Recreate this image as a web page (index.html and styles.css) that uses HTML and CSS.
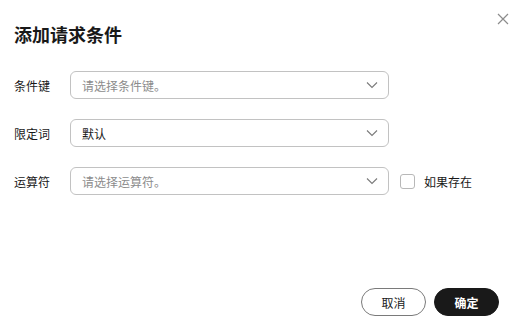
FILE: index.html
```html
<!DOCTYPE html>
<html lang="zh">
<head>
<meta charset="utf-8">
<link rel="stylesheet" href="styles.css">
</head>
<body>
<div class="dialog">
  <button class="close" aria-label="关闭">
    <svg width="12" height="12" viewBox="0 0 12 12"><path d="M1 1L11 11M11 1L1 11" stroke="#8c8c8c" stroke-width="1.2" fill="none"/></svg>
  </button>
  <h1 class="title">添加请求条件</h1>
  <div class="form">
    <div class="row">
      <label class="label">条件键</label>
      <div class="select"><span class="placeholder">请选择条件键。</span><svg class="chev" width="12" height="8" viewBox="0 0 12 8"><path d="M1 1.5L6 6.5L11 1.5" stroke="#7a7a7a" stroke-width="1.1" fill="none"/></svg></div>
    </div>
    <div class="row">
      <label class="label">限定词</label>
      <div class="select"><span class="value">默认</span><svg class="chev" width="12" height="8" viewBox="0 0 12 8"><path d="M1 1.5L6 6.5L11 1.5" stroke="#7a7a7a" stroke-width="1.1" fill="none"/></svg></div>
    </div>
    <div class="row">
      <label class="label">运算符</label>
      <div class="select"><span class="placeholder">请选择运算符。</span><svg class="chev" width="12" height="8" viewBox="0 0 12 8"><path d="M1 1.5L6 6.5L11 1.5" stroke="#7a7a7a" stroke-width="1.1" fill="none"/></svg></div>
      <label class="check"><span class="box"></span><span>如果存在</span></label>
    </div>
  </div>
  <div class="footer">
    <button class="btn btn-cancel">取消</button>
    <button class="btn btn-ok">确定</button>
  </div>
</div>
</body>
</html>
```
FILE: styles.css
```css
* { box-sizing: border-box; }
html, body { margin: 0; background: #fff; }
body {
  font-family: "Noto Sans CJK SC", "Noto Sans", sans-serif;
  color: #191919;
  width: 515px;
  height: 335px;
  overflow: hidden;
}
.dialog {
  position: relative;
  width: 515px;
  height: 335px;
  padding: 22px 16px 19px 14px;
  display: flex;
  flex-direction: column;
}
.close {
  position: absolute;
  top: 12px;
  right: 5px;
  width: 14px;
  height: 14px;
  padding: 1px;
  border: none;
  background: none;
  display: flex;
}
.title {
  margin: 0;
  font-size: 18px;
  line-height: 24px;
  font-weight: 700;
}
.form {
  margin-top: 25px;
  display: flex;
  flex-direction: column;
  gap: 20px;
}
.row {
  display: flex;
  align-items: center;
  height: 28px;
}
.label {
  width: 56px;
  font-size: 12px;
  color: #191919;
}
.select {
  width: 319px;
  height: 28px;
  border: 1px solid #c2c2c2;
  border-radius: 6px;
  display: flex;
  align-items: center;
  justify-content: space-between;
  padding: 0 10px 0 11px;
  font-size: 12px;
}
.placeholder { color: #8c8c8c; }
.value { color: #191919; }
.check {
  margin-left: 11px;
  display: flex;
  align-items: center;
  gap: 9px;
  font-size: 12px;
}
.box {
  width: 15px;
  height: 15px;
  border: 1px solid #b8b8b8;
  border-radius: 3px;
}
.footer {
  margin-top: auto;
  display: flex;
  justify-content: flex-end;
  gap: 8px;
}
.btn {
  width: 65px;
  height: 28px;
  border-radius: 14px;
  font-family: inherit;
  font-size: 12px;
  padding: 0;
}
.btn-cancel {
  background: #fff;
  border: 1px solid #7a7a7a;
  color: #191919;
}
.btn-ok {
  background: #191919;
  border: 1px solid #191919;
  color: #fff;
  font-weight: 700;
}
```
